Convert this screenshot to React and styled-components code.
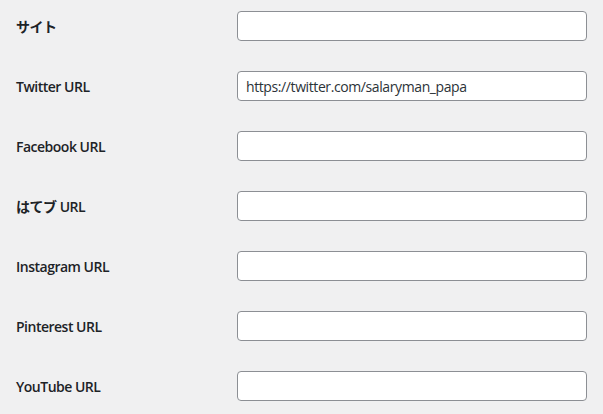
import styled, { createGlobalStyle } from "styled-components";

const GlobalStyle = createGlobalStyle`
  html, body {
    margin: 0;
    padding: 0;
    background: #f0f0f1;
  }
  body {
    font-family: "Open Sans", "Noto Sans CJK JP", sans-serif;
    color: #1d2327;
  }
`;

const fields = [
  { label: "サイト", value: "" },
  { label: "Twitter URL", value: "https://twitter.com/salaryman_papa" },
  { label: "Facebook URL", value: "" },
  { label: "はてブ URL", value: "" },
  { label: "Instagram URL", value: "" },
  { label: "Pinterest URL", value: "" },
  { label: "YouTube URL", value: "" },
];

const App = () => {
  return (
    <>
      <GlobalStyle />
      <FormTable>
        {fields.map((f) => (
          <Row key={f.label}>
            <Label>{f.label}</Label>
            <TextInput type="text" defaultValue={f.value} />
          </Row>
        ))}
      </FormTable>
    </>
  );
};
export default App;

const FormTable = styled.div`
  display: flex;
  flex-direction: column;
  gap: 30px;
  padding: 11px 0 0 16px;
`;

const Row = styled.div`
  display: grid;
  grid-template-columns: 221px 350px;
  align-items: center;
  height: 30px;
`;

const Label = styled.label`
  padding-top: 2px;
  font-size: 14px;
  font-weight: 600;
  letter-spacing: -0.5px;
  color: #1d2327;
  line-height: 1.3;
`;

const TextInput = styled.input`
  box-sizing: border-box;
  width: 350px;
  height: 30px;
  margin: 0;
  padding: 0 8px;
  border: 1px solid #8c8f94;
  border-radius: 4px;
  background: #fff;
  font-family: "Open Sans", "Noto Sans CJK JP", sans-serif;
  font-size: 14px;
  letter-spacing: -0.4px;
  color: #2c3338;
  outline: none;
`;
